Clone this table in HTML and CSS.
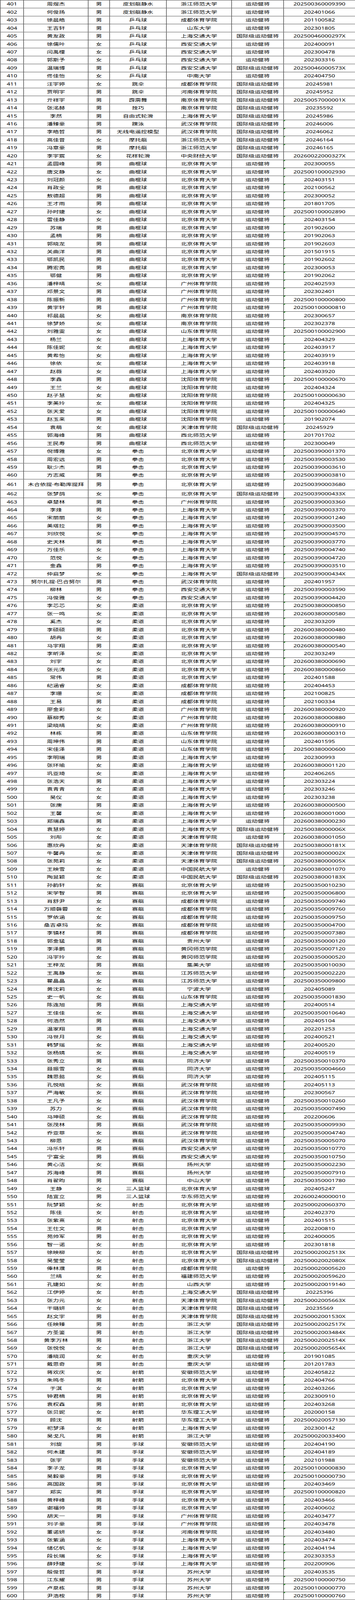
FILE: index.html
```html
<!DOCTYPE html>
<html lang="zh-CN">
<head>
<meta charset="utf-8">
<title>运动健将名单</title>
<link rel="stylesheet" href="styles.css">
</head>
<body>
<div class="frame">
<div class="sheet">
<div class="r"><span>401</span><span>周煜杰</span><span>男</span><span>皮划艇静水</span><span>浙江师范大学</span><span>运动健将</span><span>202500360009390</span></div>
<div class="r"><span>402</span><span>何俊扬</span><span>男</span><span>皮划艇静水</span><span>浙江师范大学</span><span>运动健将</span><span>202401066</span></div>
<div class="r"><span>403</span><span>徐晨皓</span><span>男</span><span>乒乓球</span><span>成都体育学院</span><span>运动健将</span><span>201100582</span></div>
<div class="r"><span>404</span><span>王吉轩</span><span>男</span><span>乒乓球</span><span>山东大学</span><span>运动健将</span><span>202301805</span></div>
<div class="r"><span>405</span><span>黄友政</span><span>男</span><span>乒乓球</span><span>上海交通大学</span><span>国际级运动健将</span><span>20250046000297X</span></div>
<div class="r"><span>406</span><span>徐儒叶</span><span>女</span><span>乒乓球</span><span>西安交通大学</span><span>运动健将</span><span>202400091</span></div>
<div class="r"><span>407</span><span>闫禹橦</span><span>女</span><span>乒乓球</span><span>西安交通大学</span><span>运动健将</span><span>202300478</span></div>
<div class="r"><span>408</span><span>郭斯予</span><span>女</span><span>乒乓球</span><span>西安交通大学</span><span>运动健将</span><span>202303316</span></div>
<div class="r"><span>409</span><span>温瑞博</span><span>男</span><span>乒乓球</span><span>西安交通大学</span><span>国际级运动健将</span><span>20250046000573X</span></div>
<div class="r"><span>410</span><span>佟佳怡</span><span>女</span><span>乒乓球</span><span>中南大学</span><span>运动健将</span><span>202404750</span></div>
<div class="r"><span>411</span><span>汪宇婷</span><span>女</span><span>跳伞</span><span>成都体育学院</span><span>国际级运动健将</span><span>20245981</span></div>
<div class="r"><span>412</span><span>贾明宇</span><span>男</span><span>跳伞</span><span>河南体育学院</span><span>国际级运动健将</span><span>20245952</span></div>
<div class="r"><span>413</span><span>亓祥宇</span><span>男</span><span>霹雳舞</span><span>南京体育学院</span><span>国际级运动健将</span><span>20250057000001X</span></div>
<div class="r"><span>414</span><span>张洺赫</span><span>男</span><span>技巧</span><span>南京体育学院</span><span>国际级运动健将</span><span>20235592</span></div>
<div class="r"><span>415</span><span>李然</span><span>男</span><span>自由式轮滑</span><span>上海体育大学</span><span>国际级运动健将</span><span>20245986</span></div>
<div class="r"><span>416</span><span>潘臻豪</span><span>男</span><span>蹼泳</span><span>武汉体育学院</span><span>国际级运动健将</span><span class="t">20246006</span></div>
<div class="r"><span>417</span><span>李皓哲</span><span>男</span><span>无线电遥控模型</span><span>武汉体育学院</span><span>国际级运动健将</span><span class="t">20246062</span></div>
<div class="r"><span>418</span><span>高佳音</span><span>女</span><span>摩托艇</span><span>浙江师范大学</span><span>国际级运动健将</span><span class="t">20246164</span></div>
<div class="r"><span>419</span><span>冯章豪</span><span>男</span><span>摩托艇</span><span>浙江师范大学</span><span>国际级运动健将</span><span class="t">20246165</span></div>
<div class="r"><span>420</span><span>李宇宸</span><span>女</span><span>花样轮滑</span><span>中央财经大学</span><span>国际级运动健将</span><span>20260022000327X</span></div>
<div class="r"><span>421</span><span>孟圆峰</span><span>男</span><span>曲棍球</span><span>北京体育大学</span><span>运动健将</span><span class="t">202300055</span></div>
<div class="r"><span>422</span><span>唐文静</span><span>女</span><span>曲棍球</span><span>北京体育大学</span><span>运动健将</span><span class="t">202500100002930</span></div>
<div class="r"><span>423</span><span>刘冠颜</span><span>女</span><span>曲棍球</span><span>北京体育大学</span><span>运动健将</span><span class="t">202403151</span></div>
<div class="r"><span>424</span><span>肖政全</span><span>男</span><span>曲棍球</span><span>北京体育大学</span><span>运动健将</span><span class="t">202100562</span></div>
<div class="r"><span>425</span><span>敖德超</span><span>男</span><span>曲棍球</span><span>北京体育大学</span><span>运动健将</span><span class="t">202300052</span></div>
<div class="r"><span>426</span><span>王才雨</span><span>男</span><span>曲棍球</span><span>北京体育大学</span><span>运动健将</span><span class="t">201801705</span></div>
<div class="r"><span>427</span><span>孙时婕</span><span>女</span><span>曲棍球</span><span>北京体育大学</span><span>运动健将</span><span class="t">202500100002890</span></div>
<div class="r"><span>428</span><span>雷佳静</span><span>女</span><span>曲棍球</span><span>北京体育大学</span><span>运动健将</span><span class="t">202403154</span></div>
<div class="r"><span>429</span><span>苏瑞</span><span>男</span><span>曲棍球</span><span>北京体育大学</span><span>运动健将</span><span class="t">201902600</span></div>
<div class="r"><span>430</span><span>孟楠</span><span>男</span><span>曲棍球</span><span>北京体育大学</span><span>运动健将</span><span class="t">201902063</span></div>
<div class="r"><span>431</span><span>郭晓龙</span><span>男</span><span>曲棍球</span><span>北京体育大学</span><span>运动健将</span><span class="t">201902603</span></div>
<div class="r"><span>432</span><span>关曲洋</span><span>男</span><span>曲棍球</span><span>北京体育大学</span><span>运动健将</span><span class="t">201501915</span></div>
<div class="r"><span>433</span><span>鄂凯民</span><span>男</span><span>曲棍球</span><span>北京体育大学</span><span>运动健将</span><span class="t">201902602</span></div>
<div class="r"><span>434</span><span>腾宏亮</span><span>男</span><span>曲棍球</span><span>北京体育大学</span><span>运动健将</span><span class="t">202300053</span></div>
<div class="r"><span>435</span><span>鄂健</span><span>男</span><span>曲棍球</span><span>北京体育大学</span><span>运动健将</span><span class="t">201902062</span></div>
<div class="r"><span>436</span><span>潘梓晴</span><span>女</span><span>曲棍球</span><span>广州体育学院</span><span>运动健将</span><span class="t">202402593</span></div>
<div class="r"><span>437</span><span>邓景文</span><span>男</span><span>曲棍球</span><span>广州体育学院</span><span>运动健将</span><span class="t">202302401</span></div>
<div class="r"><span>438</span><span>陈振新</span><span>男</span><span>曲棍球</span><span>广州体育学院</span><span>运动健将</span><span class="t">202500100000800</span></div>
<div class="r"><span>439</span><span>黄宇轩</span><span>男</span><span>曲棍球</span><span>广州体育学院</span><span>运动健将</span><span class="t">202500100000810</span></div>
<div class="r"><span>440</span><span>祁晨晨</span><span>女</span><span>曲棍球</span><span>南京体育学院</span><span>运动健将</span><span class="t">202300657</span></div>
<div class="r"><span>441</span><span>徐梦娇</span><span>女</span><span>曲棍球</span><span>南京体育学院</span><span>运动健将</span><span class="t">202302378</span></div>
<div class="r"><span>442</span><span>刘雅雯</span><span>女</span><span>曲棍球</span><span>山东体育学院</span><span>运动健将</span><span class="t">202500100002900</span></div>
<div class="r"><span>443</span><span>杨兰</span><span>女</span><span>曲棍球</span><span>上海体育大学</span><span>运动健将</span><span class="t">202404329</span></div>
<div class="r"><span>444</span><span>陈佳妮</span><span>女</span><span>曲棍球</span><span>上海体育大学</span><span>运动健将</span><span class="t">202403917</span></div>
<div class="r"><span>445</span><span>黄希怡</span><span>女</span><span>曲棍球</span><span>上海体育大学</span><span>运动健将</span><span class="t">202403919</span></div>
<div class="r"><span>446</span><span>徐依</span><span>女</span><span>曲棍球</span><span>上海体育大学</span><span>运动健将</span><span class="t">202403918</span></div>
<div class="r"><span>447</span><span>赵薇</span><span>女</span><span>曲棍球</span><span>上海体育大学</span><span>运动健将</span><span class="t">202403920</span></div>
<div class="r"><span>448</span><span>李鑫</span><span>男</span><span>曲棍球</span><span>沈阳体育学院</span><span>运动健将</span><span class="t">202500100000670</span></div>
<div class="r"><span>449</span><span>王兰</span><span>女</span><span>曲棍球</span><span>沈阳体育学院</span><span>运动健将</span><span class="t">202404324</span></div>
<div class="r"><span>450</span><span>赵子慧</span><span>女</span><span>曲棍球</span><span>沈阳体育学院</span><span>运动健将</span><span class="t">202500100000630</span></div>
<div class="r"><span>451</span><span>李美玲</span><span>女</span><span>曲棍球</span><span>沈阳体育学院</span><span>运动健将</span><span class="t">202404325</span></div>
<div class="r"><span>452</span><span>张天爱</span><span>女</span><span>曲棍球</span><span>沈阳体育学院</span><span>运动健将</span><span class="t">202500100000640</span></div>
<div class="r"><span>453</span><span>赵玉来</span><span>男</span><span>曲棍球</span><span>沈阳体育学院</span><span>运动健将</span><span class="t">201902074</span></div>
<div class="r"><span>454</span><span>袁萌</span><span>女</span><span>曲棍球</span><span>天津体育学院</span><span>国际级运动健将</span><span class="t">20245929</span></div>
<div class="r"><span>455</span><span>郭海峰</span><span>男</span><span>曲棍球</span><span>西北师范大学</span><span>运动健将</span><span class="t">201701702</span></div>
<div class="r"><span>456</span><span>王民寿</span><span>男</span><span>曲棍球</span><span>西北师范大学</span><span>运动健将</span><span class="t">202300049</span></div>
<div class="r"><span>457</span><span>倪博雅</span><span>女</span><span>拳击</span><span>北京体育大学</span><span>运动健将</span><span class="t">202500390001370</span></div>
<div class="r"><span>458</span><span>周宏远</span><span>男</span><span>拳击</span><span>北京体育大学</span><span>运动健将</span><span class="t">202500390003530</span></div>
<div class="r"><span>459</span><span>耿少杰</span><span>男</span><span>拳击</span><span>北京体育大学</span><span>运动健将</span><span class="t">202500390003610</span></div>
<div class="r"><span>460</span><span>方志威</span><span>男</span><span>拳击</span><span>北京体育大学</span><span>运动健将</span><span class="t">202500390003810</span></div>
<div class="r tall"><span>461</span><span>木合依提·布勒库提拜</span><span>男</span><span>拳击</span><span>北京体育大学</span><span>运动健将</span><span class="t">202500390003680</span></div>
<div class="r"><span>462</span><span>张梦鸽</span><span>女</span><span>拳击</span><span>北京体育大学</span><span>国际级运动健将</span><span>20250039000433X</span></div>
<div class="r"><span>463</span><span>卓楚林</span><span>男</span><span>拳击</span><span>广州体育学院</span><span>运动健将</span><span class="t">202500390003360</span></div>
<div class="r"><span>464</span><span>李烽</span><span>男</span><span>拳击</span><span>上海体育大学</span><span>运动健将</span><span class="t">202500390003370</span></div>
<div class="r"><span>465</span><span>宋丽丽</span><span>女</span><span>拳击</span><span>上海体育大学</span><span>运动健将</span><span class="t">202500390001240</span></div>
<div class="r"><span>466</span><span>美塔拉</span><span>男</span><span>拳击</span><span>上海体育大学</span><span>运动健将</span><span class="t">202500390003500</span></div>
<div class="r"><span>467</span><span>刘欣悦</span><span>女</span><span>拳击</span><span>上海体育大学</span><span>运动健将</span><span class="t">202500390004570</span></div>
<div class="r"><span>468</span><span>史天林</span><span>男</span><span>拳击</span><span>上海体育大学</span><span>运动健将</span><span class="t">202500390003770</span></div>
<div class="r"><span>469</span><span>万佳乐</span><span>女</span><span>拳击</span><span>上海体育大学</span><span>运动健将</span><span class="t">202500390004740</span></div>
<div class="r"><span>470</span><span>范悦</span><span>女</span><span>拳击</span><span>上海体育大学</span><span>运动健将</span><span class="t">202500390004720</span></div>
<div class="r"><span>471</span><span>金鑫</span><span>男</span><span>拳击</span><span>上海体育大学</span><span>运动健将</span><span class="t">202500390003510</span></div>
<div class="r"><span>472</span><span>仲启梦</span><span>女</span><span>拳击</span><span>上海体育大学</span><span>国际级运动健将</span><span>20250039000434X</span></div>
<div class="r"><span>473</span><span>努尔扎提·巴合努尔</span><span>男</span><span>拳击</span><span>武汉体育学院</span><span>运动健将</span><span class="t">202401957</span></div>
<div class="r"><span>474</span><span>柳林</span><span>男</span><span>拳击</span><span>西安交通大学</span><span>运动健将</span><span class="t">202500390003590</span></div>
<div class="r"><span>475</span><span>冯俊雅</span><span>女</span><span>拳击</span><span>西安交通大学</span><span>运动健将</span><span class="t">202500390004420</span></div>
<div class="r"><span>476</span><span>李芯芯</span><span>女</span><span>柔道</span><span>北京体育大学</span><span>运动健将</span><span class="t">202500380000850</span></div>
<div class="r"><span>477</span><span>张一鸣</span><span>女</span><span>柔道</span><span>北京体育大学</span><span>运动健将</span><span class="t">202600380000580</span></div>
<div class="r"><span>478</span><span>奚杰</span><span>女</span><span>柔道</span><span>北京体育大学</span><span>运动健将</span><span class="t">202303209</span></div>
<div class="r"><span>479</span><span>李硕硕</span><span>男</span><span>柔道</span><span>北京体育大学</span><span>运动健将</span><span class="t">202600380000480</span></div>
<div class="r"><span>480</span><span>胡冉</span><span>女</span><span>柔道</span><span>北京体育大学</span><span>运动健将</span><span class="t">202600380000980</span></div>
<div class="r"><span>481</span><span>马宇翔</span><span>男</span><span>柔道</span><span>北京体育大学</span><span>运动健将</span><span class="t">202600380000540</span></div>
<div class="r"><span>482</span><span>李昕泽</span><span>女</span><span>柔道</span><span>北京体育大学</span><span>运动健将</span><span class="t">202303249</span></div>
<div class="r"><span>483</span><span>刘宇</span><span>女</span><span>柔道</span><span>北京体育大学</span><span>运动健将</span><span class="t">202600380000690</span></div>
<div class="r"><span>484</span><span>张元涛</span><span>女</span><span>柔道</span><span>北京体育大学</span><span>运动健将</span><span class="t">202600380000860</span></div>
<div class="r"><span>485</span><span>常伟</span><span>男</span><span>柔道</span><span>北京体育大学</span><span>运动健将</span><span class="t">202401588</span></div>
<div class="r"><span>486</span><span>纪涵睿</span><span>女</span><span>柔道</span><span>成都体育学院</span><span>运动健将</span><span class="t">202404453</span></div>
<div class="r"><span>487</span><span>李珊</span><span>女</span><span>柔道</span><span>成都体育学院</span><span>运动健将</span><span class="t">202100825</span></div>
<div class="r"><span>488</span><span>王易</span><span>男</span><span>柔道</span><span>成都体育学院</span><span>运动健将</span><span class="t">202100334</span></div>
<div class="r"><span>489</span><span>廖金彩</span><span>女</span><span>柔道</span><span>广州体育学院</span><span>运动健将</span><span class="t">202600380000920</span></div>
<div class="r"><span>490</span><span>蔡柳秀</span><span>女</span><span>柔道</span><span>广州体育学院</span><span>运动健将</span><span class="t">202600380000880</span></div>
<div class="r"><span>491</span><span>梁晓晴</span><span>女</span><span>柔道</span><span>广州体育学院</span><span>运动健将</span><span class="t">202600380000910</span></div>
<div class="r"><span>492</span><span>林栋</span><span>男</span><span>柔道</span><span>山东体育学院</span><span>运动健将</span><span class="t">202600380000310</span></div>
<div class="r"><span>493</span><span>周坤伟</span><span>男</span><span>柔道</span><span>山东体育学院</span><span>运动健将</span><span class="t">202401595</span></div>
<div class="r"><span>494</span><span>宋佳泽</span><span>男</span><span>柔道</span><span>山东体育学院</span><span>运动健将</span><span class="t">202500380000600</span></div>
<div class="r"><span>495</span><span>李明瑞</span><span>男</span><span>柔道</span><span>上海体育大学</span><span>运动健将</span><span class="t">202300993</span></div>
<div class="r"><span>496</span><span>张环喻</span><span>女</span><span>柔道</span><span>上海体育大学</span><span>运动健将</span><span class="t">202600380001120</span></div>
<div class="r"><span>497</span><span>巩亚琦</span><span>女</span><span>柔道</span><span>上海体育大学</span><span>运动健将</span><span class="t">202406265</span></div>
<div class="r"><span>498</span><span>张浩天</span><span>男</span><span>柔道</span><span>上海体育大学</span><span>运动健将</span><span class="t">202303224</span></div>
<div class="r"><span>499</span><span>袁青青</span><span>女</span><span>柔道</span><span>上海体育大学</span><span>运动健将</span><span class="t">202303246</span></div>
<div class="r"><span>500</span><span>吴仪</span><span>女</span><span>柔道</span><span>上海体育大学</span><span>运动健将</span><span class="t">202303238</span></div>
<div class="r"><span>501</span><span>张庚</span><span>男</span><span>柔道</span><span>上海体育大学</span><span>运动健将</span><span class="t">202600380000500</span></div>
<div class="r"><span>502</span><span>王馨</span><span>女</span><span>柔道</span><span>上海体育大学</span><span>运动健将</span><span class="t">202600380001000</span></div>
<div class="r"><span>503</span><span>郑瑞鑫</span><span>男</span><span>柔道</span><span>上海体育大学</span><span>运动健将</span><span class="t">202600380000230</span></div>
<div class="r"><span>504</span><span>袁慧婷</span><span>女</span><span>柔道</span><span>上海体育大学</span><span>国际级运动健将</span><span>20250038000006X</span></div>
<div class="r"><span>505</span><span>刘彤</span><span>女</span><span>柔道</span><span>天津体育学院</span><span>运动健将</span><span class="t">202600380001050</span></div>
<div class="r"><span>506</span><span>惠欣冉</span><span>女</span><span>柔道</span><span>天津体育学院</span><span>国际级运动健将</span><span>20250038000181X</span></div>
<div class="r"><span>507</span><span>牛馨冉</span><span>女</span><span>柔道</span><span>天津体育学院</span><span>国际级运动健将</span><span>20250038000002X</span></div>
<div class="r"><span>508</span><span>张苑莉</span><span>女</span><span>柔道</span><span>天津体育学院</span><span>国际级运动健将</span><span>20250038000005X</span></div>
<div class="r"><span>509</span><span>王映雪</span><span>女</span><span>柔道</span><span>中国民航大学</span><span>运动健将</span><span class="t">202600380001070</span></div>
<div class="r"><span>510</span><span>陶昱颖</span><span>女</span><span>柔道</span><span>中国民航大学</span><span>国际级运动健将</span><span>20250038000183X</span></div>
<div class="r"><span>511</span><span>孙韵轩</span><span>女</span><span>赛艇</span><span>北京体育大学</span><span>运动健将</span><span class="t">202500350010230</span></div>
<div class="r"><span>512</span><span>宋学智</span><span>男</span><span>赛艇</span><span>北京体育大学</span><span>运动健将</span><span class="t">202500350006800</span></div>
<div class="r"><span>513</span><span>肖舒尹</span><span>女</span><span>赛艇</span><span>成都体育学院</span><span>运动健将</span><span class="t">202500350009740</span></div>
<div class="r"><span>514</span><span>万顺磬蓉</span><span>女</span><span>赛艇</span><span>成都体育学院</span><span>运动健将</span><span class="t">202500350009760</span></div>
<div class="r"><span>515</span><span>罗依涵</span><span>女</span><span>赛艇</span><span>成都体育学院</span><span>运动健将</span><span class="t">202500350009750</span></div>
<div class="r"><span>516</span><span>桑吉卓玛</span><span>女</span><span>赛艇</span><span>成都体育学院</span><span>运动健将</span><span class="t">202500350004700</span></div>
<div class="r"><span>517</span><span>李镇材</span><span>男</span><span>赛艇</span><span>成都体育学院</span><span>运动健将</span><span class="t">202500350007380</span></div>
<div class="r"><span>518</span><span>郭金猛</span><span>男</span><span>赛艇</span><span>贵州大学</span><span>运动健将</span><span class="t">202500350000120</span></div>
<div class="r"><span>519</span><span>李泽鹏</span><span>男</span><span>赛艇</span><span>黄冈师范学院</span><span>运动健将</span><span class="t">202500350007120</span></div>
<div class="r"><span>520</span><span>冯宇玲</span><span>女</span><span>赛艇</span><span>黄冈师范学院</span><span>运动健将</span><span class="t">202500350000520</span></div>
<div class="r"><span>521</span><span>王梓龙</span><span>男</span><span>赛艇</span><span>集美大学</span><span>运动健将</span><span class="t">202500350010030</span></div>
<div class="r"><span>522</span><span>王禹静</span><span>女</span><span>赛艇</span><span>江苏师范大学</span><span>运动健将</span><span class="t">202500350002220</span></div>
<div class="r"><span>523</span><span>瞿晶晶</span><span>女</span><span>赛艇</span><span>江苏师范大学</span><span>运动健将</span><span class="t">202500350009800</span></div>
<div class="r"><span>524</span><span>黄沈莉</span><span>女</span><span>赛艇</span><span>宁波大学</span><span>运动健将</span><span class="t">202405089</span></div>
<div class="r"><span>525</span><span>史一帆</span><span>女</span><span>赛艇</span><span>山东体育学院</span><span>运动健将</span><span class="t">202500350001830</span></div>
<div class="r"><span>526</span><span>陈连旭</span><span>男</span><span>赛艇</span><span>上海交通大学</span><span>运动健将</span><span class="t">202400514</span></div>
<div class="r"><span>527</span><span>王佳佳</span><span>女</span><span>赛艇</span><span>上海交通大学</span><span>运动健将</span><span class="t">202500350010640</span></div>
<div class="r"><span>528</span><span>何浩然</span><span>男</span><span>赛艇</span><span>上海交通大学</span><span>运动健将</span><span class="t">202405104</span></div>
<div class="r"><span>529</span><span>温家翔</span><span>男</span><span>赛艇</span><span>上海交通大学</span><span>运动健将</span><span class="t">202201253</span></div>
<div class="r"><span>530</span><span>冯世月</span><span>女</span><span>赛艇</span><span>上海交通大学</span><span>运动健将</span><span class="t">202400521</span></div>
<div class="r"><span>531</span><span>韩梦瑶</span><span>女</span><span>赛艇</span><span>上海交通大学</span><span>运动健将</span><span class="t">202400520</span></div>
<div class="r"><span>532</span><span>张杨婧</span><span>女</span><span>赛艇</span><span>上海交通大学</span><span>运动健将</span><span class="t">202400519</span></div>
<div class="r"><span>533</span><span>张秀立</span><span>男</span><span>赛艇</span><span>同济大学</span><span>运动健将</span><span class="t">202500350010370</span></div>
<div class="r"><span>534</span><span>聂振雪</span><span>女</span><span>赛艇</span><span>同济大学</span><span>运动健将</span><span class="t">202500350004660</span></div>
<div class="r"><span>535</span><span>魏思懿</span><span>女</span><span>赛艇</span><span>同济大学</span><span>运动健将</span><span class="t">202405115</span></div>
<div class="r"><span>536</span><span>孔悦晗</span><span>女</span><span>赛艇</span><span>武汉体育学院</span><span>运动健将</span><span class="t">202405113</span></div>
<div class="r"><span>537</span><span>严海敏</span><span>女</span><span>赛艇</span><span>武汉体育学院</span><span>运动健将</span><span class="t">202300567</span></div>
<div class="r"><span>538</span><span>王凡予</span><span>女</span><span>赛艇</span><span>武汉体育学院</span><span>运动健将</span><span class="t">202500350010260</span></div>
<div class="r"><span>539</span><span>苏力</span><span>女</span><span>赛艇</span><span>武汉体育学院</span><span>运动健将</span><span class="t">202500350007490</span></div>
<div class="r"><span>540</span><span>马坤硕</span><span>女</span><span>赛艇</span><span>武汉体育学院</span><span>运动健将</span><span class="t">202200606</span></div>
<div class="r"><span>541</span><span>张茂林</span><span>男</span><span>赛艇</span><span>武汉体育学院</span><span>运动健将</span><span class="t">202500350009930</span></div>
<div class="r"><span>542</span><span>乔亚菲</span><span>女</span><span>赛艇</span><span>武汉体育学院</span><span>运动健将</span><span class="t">202500350004740</span></div>
<div class="r"><span>543</span><span>柳思</span><span>女</span><span>赛艇</span><span>武汉体育学院</span><span>运动健将</span><span class="t">202500350005070</span></div>
<div class="r"><span>544</span><span>冯乐轩</span><span>男</span><span>赛艇</span><span>西安交通大学</span><span>运动健将</span><span class="t">202500350010770</span></div>
<div class="r"><span>545</span><span>宁富全</span><span>男</span><span>赛艇</span><span>西安交通大学</span><span>运动健将</span><span class="t">202500350010750</span></div>
<div class="r"><span>546</span><span>黄心洁</span><span>女</span><span>赛艇</span><span>扬州大学</span><span>运动健将</span><span class="t">202500350002230</span></div>
<div class="r"><span>547</span><span>苏海峰</span><span>男</span><span>赛艇</span><span>扬州大学</span><span>运动健将</span><span class="t">202500350007910</span></div>
<div class="r"><span>548</span><span>肖翟昀</span><span>男</span><span>赛艇</span><span>中山大学</span><span>运动健将</span><span class="t">202500350001780</span></div>
<div class="r"><span>549</span><span>王静</span><span>女</span><span>三人篮球</span><span>北京体育大学</span><span>运动健将</span><span class="t">202405247</span></div>
<div class="r"><span>550</span><span>陆宜立</span><span>男</span><span>三人篮球</span><span>华东师范大学</span><span>运动健将</span><span class="t">202600240000010</span></div>
<div class="r"><span>551</span><span>阮梦颖</span><span>女</span><span>射击</span><span>北京体育大学</span><span>运动健将</span><span class="t">202500020060370</span></div>
<div class="r"><span>552</span><span>陈佳</span><span>女</span><span>射击</span><span>北京体育大学</span><span>运动健将</span><span class="t">202402370</span></div>
<div class="r"><span>553</span><span>张紫熹</span><span>女</span><span>射击</span><span>北京体育大学</span><span>运动健将</span><span class="t">202401515</span></div>
<div class="r"><span>554</span><span>王仕文</span><span>男</span><span>射击</span><span>北京体育大学</span><span>运动健将</span><span class="t">202200810</span></div>
<div class="r"><span>555</span><span>苑帅军</span><span>男</span><span>射击</span><span>北京体育大学</span><span>运动健将</span><span class="t">202400005</span></div>
<div class="r"><span>556</span><span>智一诺</span><span>女</span><span>射击</span><span>北京体育大学</span><span>运动健将</span><span class="t">202301818</span></div>
<div class="r"><span>557</span><span>徐映柳</span><span>女</span><span>射击</span><span>北京体育大学</span><span>国际级运动健将</span><span>20250002002513X</span></div>
<div class="r"><span>558</span><span>吴莹莹</span><span>女</span><span>射击</span><span>北京体育大学</span><span>国际级运动健将</span><span>20250002002080X</span></div>
<div class="r"><span>559</span><span>俸林濮</span><span>男</span><span>射击</span><span>成都体育学院</span><span>运动健将</span><span class="t">202500020005620</span></div>
<div class="r"><span>560</span><span>兰晴</span><span>女</span><span>射击</span><span>福建师范大学</span><span>运动健将</span><span class="t">202500020059620</span></div>
<div class="r"><span>561</span><span>孔婕如</span><span>女</span><span>射击</span><span>山西大学</span><span>运动健将</span><span class="t">202500020019140</span></div>
<div class="r"><span>562</span><span>江伊婷</span><span>女</span><span>射击</span><span>上海交通大学</span><span>国际级运动健将</span><span class="t">20225396</span></div>
<div class="r"><span>563</span><span>张力元</span><span>女</span><span>射击</span><span>天津体育学院</span><span>国际级运动健将</span><span>20250002005663X</span></div>
<div class="r"><span>564</span><span>干璐妍</span><span>女</span><span>射击</span><span>天津体育学院</span><span>国际级运动健将</span><span class="t">20235569</span></div>
<div class="r"><span>565</span><span>赵文宇</span><span>男</span><span>射击</span><span>天津体育学院</span><span>国际级运动健将</span><span>20250002001530X</span></div>
<div class="r"><span>566</span><span>任映臻</span><span>男</span><span>射击</span><span>浙江大学</span><span>国际级运动健将</span><span>20250002002517X</span></div>
<div class="r"><span>567</span><span>方圣鉴</span><span>男</span><span>射击</span><span>浙江大学</span><span>国际级运动健将</span><span>20250002003484X</span></div>
<div class="r"><span>568</span><span>黄李万林</span><span>男</span><span>射击</span><span>浙江大学</span><span>国际级运动健将</span><span>20250002002514X</span></div>
<div class="r"><span>569</span><span>张悦悦</span><span>女</span><span>射击</span><span>浙江大学</span><span>国际级运动健将</span><span>20250002005654X</span></div>
<div class="r"><span>570</span><span>潘晓润</span><span>女</span><span>射击</span><span>重庆大学</span><span>运动健将</span><span class="t">201901085</span></div>
<div class="r"><span>571</span><span>戴思奇</span><span>男</span><span>射击</span><span>重庆大学</span><span>运动健将</span><span class="t">201201783</span></div>
<div class="r"><span>572</span><span>蒋欢庆</span><span>女</span><span>射箭</span><span>安徽师范大学</span><span>运动健将</span><span class="t">202405822</span></div>
<div class="r"><span>573</span><span>朱鸣冬</span><span>男</span><span>射箭</span><span>北京体育大学</span><span>运动健将</span><span class="t">202404766</span></div>
<div class="r"><span>574</span><span>于淇</span><span>女</span><span>射箭</span><span>北京体育大学</span><span>运动健将</span><span class="t">202403266</span></div>
<div class="r"><span>575</span><span>钟君楠</span><span>男</span><span>射箭</span><span>北京体育大学</span><span>运动健将</span><span class="t">202300910</span></div>
<div class="r"><span>576</span><span>袁权森</span><span>男</span><span>射箭</span><span>北京体育大学</span><span>运动健将</span><span class="t">202403268</span></div>
<div class="r"><span>577</span><span>张贝妮</span><span>女</span><span>射箭</span><span>华东理工大学</span><span>运动健将</span><span class="t">202000158</span></div>
<div class="r"><span>578</span><span>顾沈</span><span>男</span><span>射箭</span><span>华东理工大学</span><span>运动健将</span><span class="t">202500020057130</span></div>
<div class="r"><span>579</span><span>祀梦泽</span><span>女</span><span>射箭</span><span>上海体育大学</span><span>运动健将</span><span class="t">202300142</span></div>
<div class="r"><span>580</span><span>吴戈凡</span><span>男</span><span>射箭</span><span>浙江大学</span><span>运动健将</span><span class="t">202500020033400</span></div>
<div class="r"><span>581</span><span>刘旋</span><span>男</span><span>手球</span><span>安徽师范大学</span><span>运动健将</span><span class="t">202404190</span></div>
<div class="r"><span>582</span><span>何木建</span><span>男</span><span>手球</span><span>安徽师范大学</span><span>运动健将</span><span class="t">202404189</span></div>
<div class="r"><span>583</span><span>张宇</span><span>男</span><span>手球</span><span>安徽师范大学</span><span>运动健将</span><span class="t">202101988</span></div>
<div class="r"><span>584</span><span>李子龙</span><span>男</span><span>手球</span><span>北京体育大学</span><span>运动健将</span><span class="t">202500100000830</span></div>
<div class="r"><span>585</span><span>吴毅豪</span><span>男</span><span>手球</span><span>北京体育大学</span><span>运动健将</span><span class="t">202500100000730</span></div>
<div class="r"><span>586</span><span>高国政</span><span>男</span><span>手球</span><span>北京体育大学</span><span>运动健将</span><span class="t">202403469</span></div>
<div class="r"><span>587</span><span>郑实</span><span>男</span><span>手球</span><span>北京体育大学</span><span>运动健将</span><span class="t">202500100000820</span></div>
<div class="r"><span>588</span><span>黄梓峰</span><span>男</span><span>手球</span><span>北京体育大学</span><span>运动健将</span><span class="t">202403466</span></div>
<div class="r"><span>589</span><span>谢福帅</span><span>男</span><span>手球</span><span>北京体育大学</span><span>运动健将</span><span class="t">202400602</span></div>
<div class="r"><span>590</span><span>胡天一</span><span>男</span><span>手球</span><span>广州体育学院</span><span>运动健将</span><span class="t">202403477</span></div>
<div class="r"><span>591</span><span>刘子豪</span><span>男</span><span>手球</span><span>广州体育学院</span><span>运动健将</span><span class="t">202403478</span></div>
<div class="r"><span>592</span><span>董诺妍</span><span>女</span><span>手球</span><span>河南体育学院</span><span>运动健将</span><span class="t">202403480</span></div>
<div class="r"><span>593</span><span>张紫涵</span><span>女</span><span>手球</span><span>上海体育大学</span><span>运动健将</span><span class="t">202403474</span></div>
<div class="r"><span>594</span><span>储亿帆</span><span>女</span><span>手球</span><span>上海体育大学</span><span>运动健将</span><span class="t">202404194</span></div>
<div class="r"><span>595</span><span>段长瑞</span><span>女</span><span>手球</span><span>上海体育大学</span><span>运动健将</span><span class="t">202303353</span></div>
<div class="r"><span>596</span><span>薛妤婕</span><span>女</span><span>手球</span><span>上海体育大学</span><span>运动健将</span><span class="t">202200906</span></div>
<div class="r"><span>597</span><span>殷俊哲</span><span>男</span><span>手球</span><span>苏州大学</span><span>运动健将</span><span class="t">202403535</span></div>
<div class="r"><span>598</span><span>江东耀</span><span>男</span><span>手球</span><span>苏州大学</span><span>运动健将</span><span class="t">202500100000750</span></div>
<div class="r"><span>599</span><span>卢泉栋</span><span>男</span><span>手球</span><span>苏州大学</span><span>运动健将</span><span class="t">202500100000770</span></div>
<div class="r"><span>600</span><span>尹浩桉</span><span>男</span><span>手球</span><span>苏州大学</span><span>运动健将</span><span class="t">202500100000760</span></div>
</div>
</div>
<script src="script.js"></script>
</body>
</html>
```

FILE: styles.css
```css
html,
body {
  margin: 0;
  padding: 0;
  background: #fff;
}

body {
  font-family: "Noto Sans", "Noto Sans CJK SC", sans-serif;
  font-size: 15.5px;
  line-height: 1;
  color: #000;
}

.frame {
  width: 908px;
  overflow: hidden;
}

.sheet {
  width: 908px;
  border-top: 1px solid #000;
  transform-origin: 0 0;
}

.r {
  display: grid;
  grid-template-columns: 60px 165px 55px 145px 167px 133px 183px;
  grid-template-rows: 29px;
  height: 30px;
  overflow: hidden;
  box-sizing: border-box;
  border-bottom: 1px solid #000;
}

.r.tall {
  grid-template-rows: 39px;
  height: 40px;
}

.r > span {
  position: relative;
  display: flex;
  align-items: center;
  justify-content: center;
  min-width: 0;
  min-height: 0;
  overflow: hidden;
  border-left: 1px solid #000;
  white-space: nowrap;
  padding-top: 1px;
  box-sizing: border-box;
}

.t::before {
  content: "";
  position: absolute;
  top: 0;
  left: 0;
  width: 0;
  height: 0;
  border-top: 5px solid #118a11;
  border-right: 5px solid transparent;
}
```

FILE: script.js
```js
(function () {
  var FULL = 6011;
  var frame = document.querySelector('.frame');
  var sheet = document.querySelector('.sheet');
  var h = window.innerHeight;
  if (h > 0 && h < FULL) {
    var k = h / FULL;
    sheet.style.transform = 'scaleY(' + k + ')';
    frame.style.height = h + 'px';
  }
})();
```
